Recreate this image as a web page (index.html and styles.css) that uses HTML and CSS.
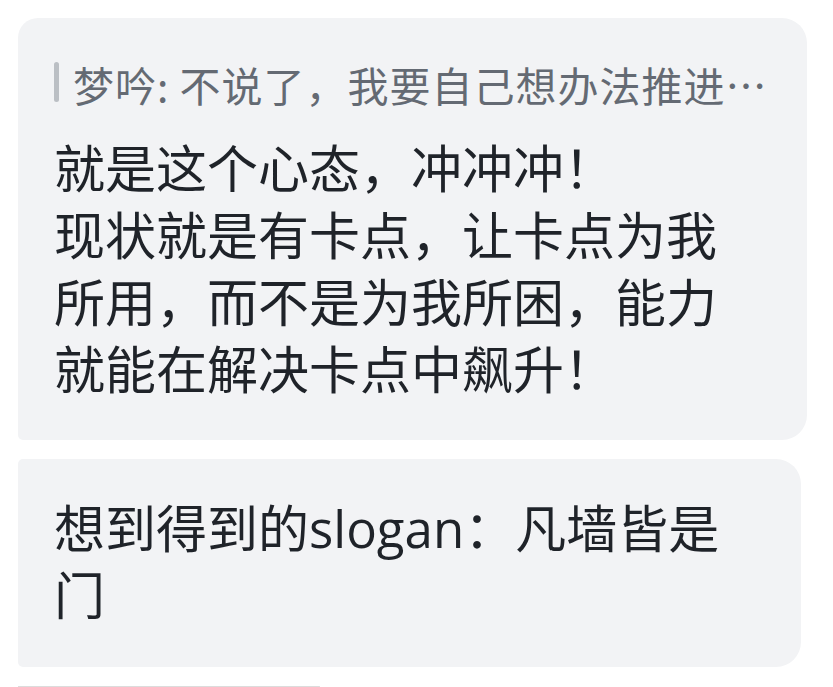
FILE: index.html
```html
<!DOCTYPE html>
<html lang="zh-CN">
<head>
<meta charset="utf-8">
<title>消息</title>
<link rel="stylesheet" href="styles.css">
</head>
<body>
<div class="chat">
  <div class="bubble bubble-first bubble-reply">
    <div class="quote">
      <span class="quote-bar"></span>
      <span class="quote-text">梦吟: 不说了，我要自己想办法推进…</span>
    </div>
    <div class="msg-text">就是这个心态，冲冲冲！<br>现状就是有卡点，让卡点为我所用，而不是为我所困，能力就能在解决卡点中飙升！</div>
  </div>
  <div class="bubble bubble-middle bubble-plain">
    <div class="msg-text">想到得到的slogan：凡墙皆是门</div>
  </div>
  <div class="bubble bubble-middle bubble-next"></div>
</div>
</body>
</html>
```
FILE: styles.css
```css
html, body {
  margin: 0;
  padding: 0;
  background: #ffffff;
  overflow: hidden;
}

body {
  font-family: "Open Sans", "Noto Sans CJK SC", sans-serif;
  color: #1f2329;
  height: 687px;
}

.chat {
  display: flex;
  flex-direction: column;
  align-items: flex-start;
  gap: 19px;
  padding: 18px 0 0 18px;
}

.bubble {
  box-sizing: border-box;
  background: #f2f3f5;
  padding: 38px 30px 37px 36px;
  border-radius: 5px 25px 25px 5px;
}

.bubble-first {
  border-top-left-radius: 20px;
}

.bubble-reply {
  width: 789px;
}

.bubble-plain {
  width: 783px;
  padding-top: 36px;
  padding-bottom: 38px;
}

.bubble-next {
  width: 302px;
  height: 1px;
  padding: 0;
  background: #eeeff1;
  border-top: 1px solid #dcdcdc;
}

.quote {
  display: flex;
  align-items: center;
  gap: 14px;
  height: 56px;
  margin-bottom: 23px;
  color: #646a73;
  font-family: "Noto Sans CJK SC", sans-serif;
  font-size: 41px;
  letter-spacing: 1px;
  line-height: 56px;
}

.quote-bar {
  flex: none;
  width: 5px;
  height: 40px;
  border-radius: 3px;
  background: #bbbfc4;
  margin-top: -4px;
}

.quote-text {
  flex: 1;
  min-width: 0;
  white-space: nowrap;
}

.msg-text {
  max-width: 700px;
  font-size: 51px;
  line-height: 67px;
  color: #1f2329;
}
```
